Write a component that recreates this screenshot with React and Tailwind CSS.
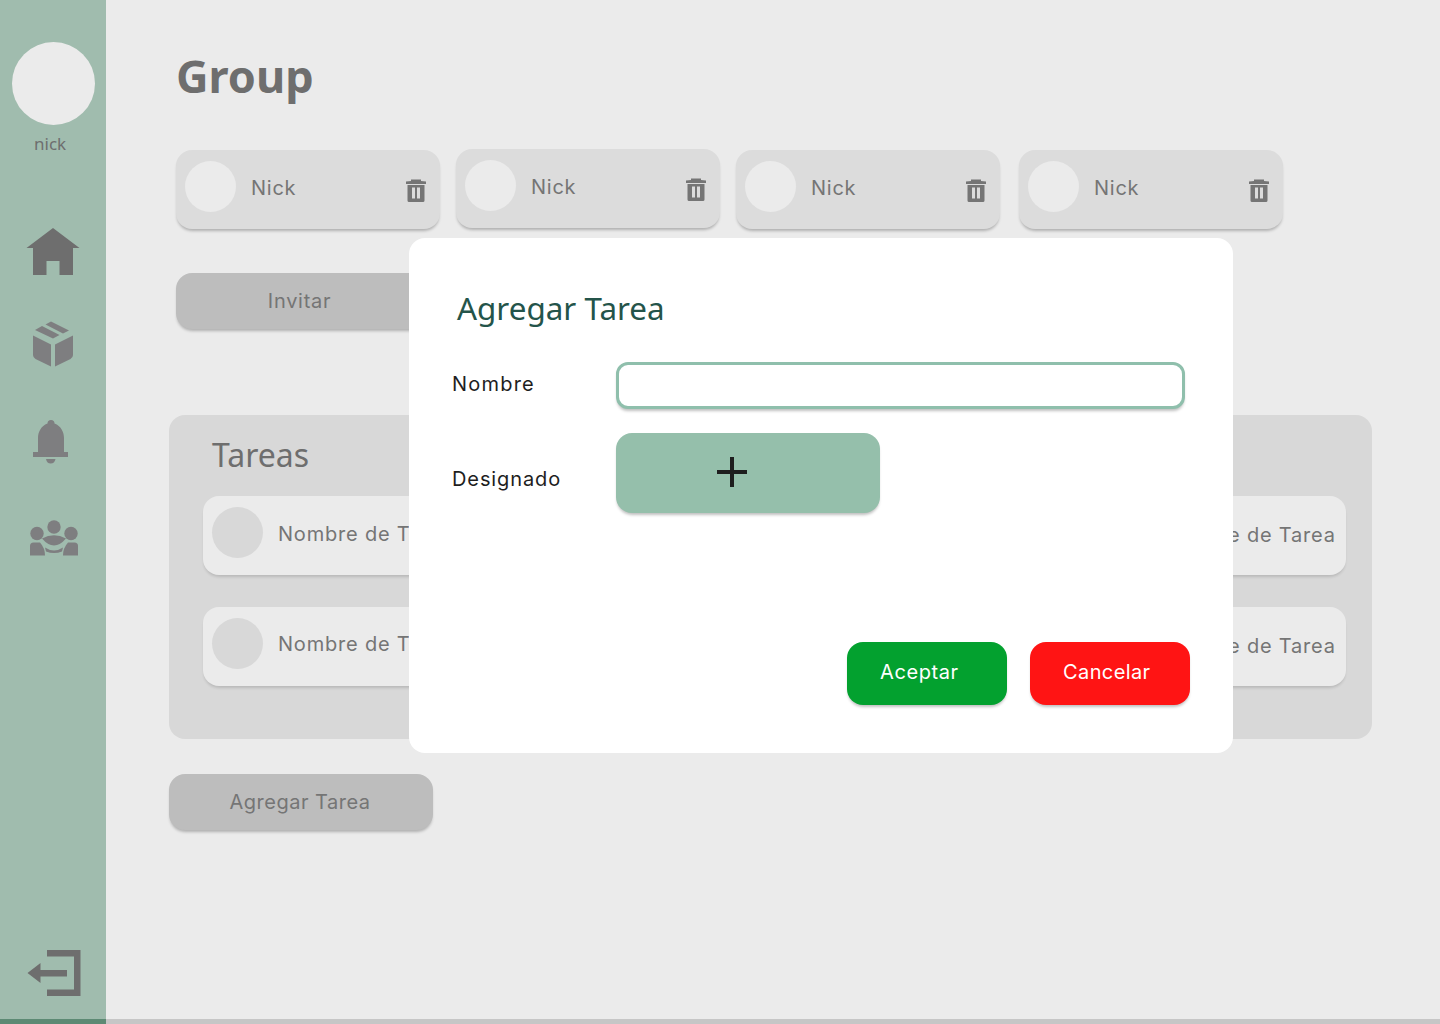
const mont = "font-['Inter','Liberation_Sans',sans-serif]";
const raised = "shadow-[0_3px_3px_-1px_rgba(0,0,0,0.25)]";

function Trash() {
  return (
    <svg width="20" height="23" viewBox="0 0 20 23" className="block">
      <path fill="#757575" d="M0 2.500 5 2V0.500H15V2L20 2.500V5H0z" />
      <path fill="#757575" fillRule="evenodd" d="M1.500 6H18.500V21.500A1.500 1.500 0 0 1 17 23H3A1.500 1.500 0 0 1 1.500 21.500zM6 8.500V19.500H9V8.500zM11 8.500V19.500H14V8.500z" />
    </svg>
  );
}

function Home() {
  return (
    <svg width="54" height="48" viewBox="0 0 54 48" className="block">
      <path fill="#6e6e6e" d="M27 0 53.500 20H47V47H33.500V33H20.500V47H7V20H0.500z" />
    </svg>
  );
}

function Box() {
  return (
    <svg width="42" height="46" viewBox="0 0 42 46" className="block">
      <path fill="#7e7e80" d="M19 0.500 37 9.500 31 12.500 13.500 3.500z" />
      <path fill="#7e7e80" d="M10 5 27.500 14 21 17.500 3 9z" />
      <path fill="#7e7e80" d="M1 14.500 19 23.500V45.500L3.500 38Q1 36.500 1 34z" />
      <path fill="#7e7e80" d="M41 14.500V34Q41 36.500 38.500 38L23 45.500V23.500z" />
    </svg>
  );
}

function Bell() {
  return (
    <svg width="36" height="46" viewBox="0 0 36 46" className="block">
      <path fill="#7e7e80" d="M14.500 4.500a3.500 3.500 0 0 1 7 0C28 7 31 13 31 19V33H35V38H0V33H5V19C5 13 8 7 14.500 4.500z" />
      <path fill="#7e7e80" d="M13 40H22.500Q21.500 44.500 17.700 44.500T13 40z" />
    </svg>
  );
}

function People() {
  return (
    <svg width="50" height="36" viewBox="0 0 50 36" className="block">
      <circle cx="25" cy="7" r="6.700" fill="#7e7e80" />
      <circle cx="8" cy="13.500" r="6.700" fill="#7e7e80" />
      <circle cx="42" cy="13.500" r="6.700" fill="#7e7e80" />
      <path fill="#7e7e80" d="M13 18.500Q25 12 37 18.500 31 25.500 25 25.500T13 18.500z" />
      <path fill="#7e7e80" d="M1 26Q1 22.500 4.500 22.500H11Q16 28 16 35.500H1z" />
      <path fill="#7e7e80" d="M49 26Q49 22.500 45.500 22.500H39Q34 28 34 35.500H49z" />
      <path fill="#7e7e80" d="M16 27.500Q25 33.500 34 27.500L33 31.500Q25 34.500 17 31.500z" />
    </svg>
  );
}

function Logout() {
  return (
    <svg width="54" height="47" viewBox="0 0 54 47" className="block">
      <path fill="#6e6e6e" d="M20 0H53.500V46H20V39.500H47V6.500H20z" />
      <path fill="#6e6e6e" d="M0.500 23 13.500 13V20H40V26.500H13.500V33z" />
    </svg>
  );
}

function Member({ className = "" }) {
  return (
    <div className={`flex h-[79px] w-[264px] items-center rounded-2xl bg-[#dcdcdc] pl-[9px] pr-[14px] ${raised} ${className}`}>
      <div className="h-[51px] w-[51px] shrink-0 -translate-y-[3px] rounded-full bg-[#ebebeb]" />
      <span className="ml-[15px] flex-1 -translate-y-[2px] text-[20px] leading-none tracking-[0.75px] text-[#757575]">Nick</span>
      <div className="translate-y-[1px]"><Trash /></div>
    </div>
  );
}

function TaskCard({ textClass }) {
  return (
    <div className="flex h-[79px] w-[264px] items-center rounded-2xl bg-[#ebebeb] pl-[9px] shadow-[0_3px_3px_-1px_rgba(0,0,0,0.14)]">
      <div className="h-[51px] w-[51px] shrink-0 -translate-y-[3px] rounded-full bg-[#d8d8d8]" />
      <span className={`ml-[15px] whitespace-nowrap text-[20px] leading-none tracking-[0.8px] text-[#757575] ${textClass}`}>Nombre de Tarea</span>
    </div>
  );
}

function GreyButton({ children, className = "" }) {
  return (
    <div className={`flex items-center justify-center rounded-2xl bg-[#bdbdbd] text-[20px] leading-none text-[#757575] ${raised} ${className}`}>
      {children}
    </div>
  );
}

export default function App() {
  return (
    <div className={`relative flex h-[1024px] w-[1440px] overflow-hidden bg-[#ebebeb] ${mont}`}>
      <aside className="flex h-[1024px] w-[106px] shrink-0 flex-col border-b-[5px] border-[#5d8a74] bg-[#a0bcae] pt-[42px]">
        <div className="ml-[12px] h-[83px] w-[83px] rounded-full bg-[#ebebeb]" />
        <div className="mt-[9px] pl-[34px] text-[17px] leading-[20px] text-[#6e6e6e] font-['Noto_Sans',sans-serif]">nick</div>
        <div className="ml-[26px] mt-[74px]"><Home /></div>
        <div className="ml-[32px] mt-[45px]"><Box /></div>
        <div className="ml-[33px] mt-[52px]"><Bell /></div>
        <div className="ml-[29px] mt-[55px]"><People /></div>
        <div className="ml-[27px] mt-auto mb-[22px]"><Logout /></div>
      </aside>

      <main className="flex h-[1024px] flex-1 flex-col border-b-[5px] border-[#c6c6c6] pl-[63px]">
        <h1 className="ml-[7px] mt-[46px] text-[45px] font-bold leading-[60px] text-[#6e6e6e] font-['Noto_Sans',sans-serif]">Group</h1>
        <div className="ml-[7px] mt-[44px] flex items-start">
          <Member />
          <Member className="ml-[16px] -translate-y-[1px]" />
          <Member className="ml-[16px]" />
          <Member className="ml-[19px]" />
        </div>
        <GreyButton className="ml-[7px] mt-[44px] h-[56px] w-[264px] pr-[17px] tracking-[0.7px]">Invitar</GreyButton>
        <section className="mt-[86px] h-[324px] w-[1203px] rounded-2xl bg-[#d8d8d8] pl-[34px] pr-[26px]">
          <h2 className="ml-[9px] pt-[19px] text-[32px] leading-[42px] text-[#6e6e6e] font-['Noto_Sans',sans-serif]">Tareas</h2>
          <div className="mt-[20px] grid grid-cols-4 justify-between gap-x-[29px] gap-y-[32px]">
            <TaskCard textClass="-translate-y-[2px]" /><TaskCard textClass="-translate-y-[2px]" /><TaskCard textClass="-translate-y-[2px]" /><TaskCard textClass="translate-x-[3px] -translate-y-[1px]" />
            <TaskCard textClass="-translate-y-[3px]" /><TaskCard textClass="-translate-y-[3px]" /><TaskCard textClass="-translate-y-[3px]" /><TaskCard textClass="translate-x-[3px] -translate-y-[1px]" />
          </div>
        </section>
        <GreyButton className="mt-[35px] h-[56px] w-[264px] pr-[2px] tracking-[0.5px]">Agregar Tarea</GreyButton>
      </main>

      <div className="absolute left-[409px] top-[238px] flex h-[515px] w-[824px] flex-col rounded-2xl bg-white">
        <h2 className="ml-[48px] mt-[48px] text-[31.400px] leading-[44px] text-[#24544a] font-['Noto_Sans',sans-serif]">Agregar Tarea</h2>
        <div className="mt-[32px] flex h-[47px] items-center pl-[43px]">
          <span className="w-[164px] -translate-y-[2px] text-[20px] leading-none tracking-[1.200px] text-[#1e1e1e]">Nombre</span>
          <div className={`h-[47px] w-[569px] rounded-xl border-[3px] border-[#8fbfac] bg-white ${raised}`} />
        </div>
        <div className="mt-[24px] flex h-[80px] items-center pl-[43px]">
          <span className="w-[164px] translate-y-[6px] text-[20px] leading-none tracking-[0.900px] text-[#1e1e1e]">Designado</span>
          <div className={`flex h-[80px] w-[264px] items-center rounded-2xl bg-[#95bfab] pl-[100px] ${raised}`}>
            <svg width="32" height="32" viewBox="0 0 32 32" className="block -translate-y-[1px]"><path fill="#1e1e1e" d="M14 1h4v13h13v4H18v13h-4V18H1v-4h13z" /></svg>
          </div>
        </div>
        <div className="mt-[129px] flex justify-end gap-[23px] pr-[43px]">
          <div className={`flex h-[63px] w-[160px] items-center rounded-2xl bg-[#03a12f] pb-[3px] pl-[33px] text-[20px] leading-none tracking-[0.600px] text-white ${raised}`}>Aceptar</div>
          <div className={`flex h-[63px] w-[160px] items-center rounded-2xl bg-[#ff1414] pb-[3px] pl-[33px] text-[20px] leading-none tracking-[0.400px] text-white ${raised}`}>Cancelar</div>
        </div>
      </div>
    </div>
  );
}
